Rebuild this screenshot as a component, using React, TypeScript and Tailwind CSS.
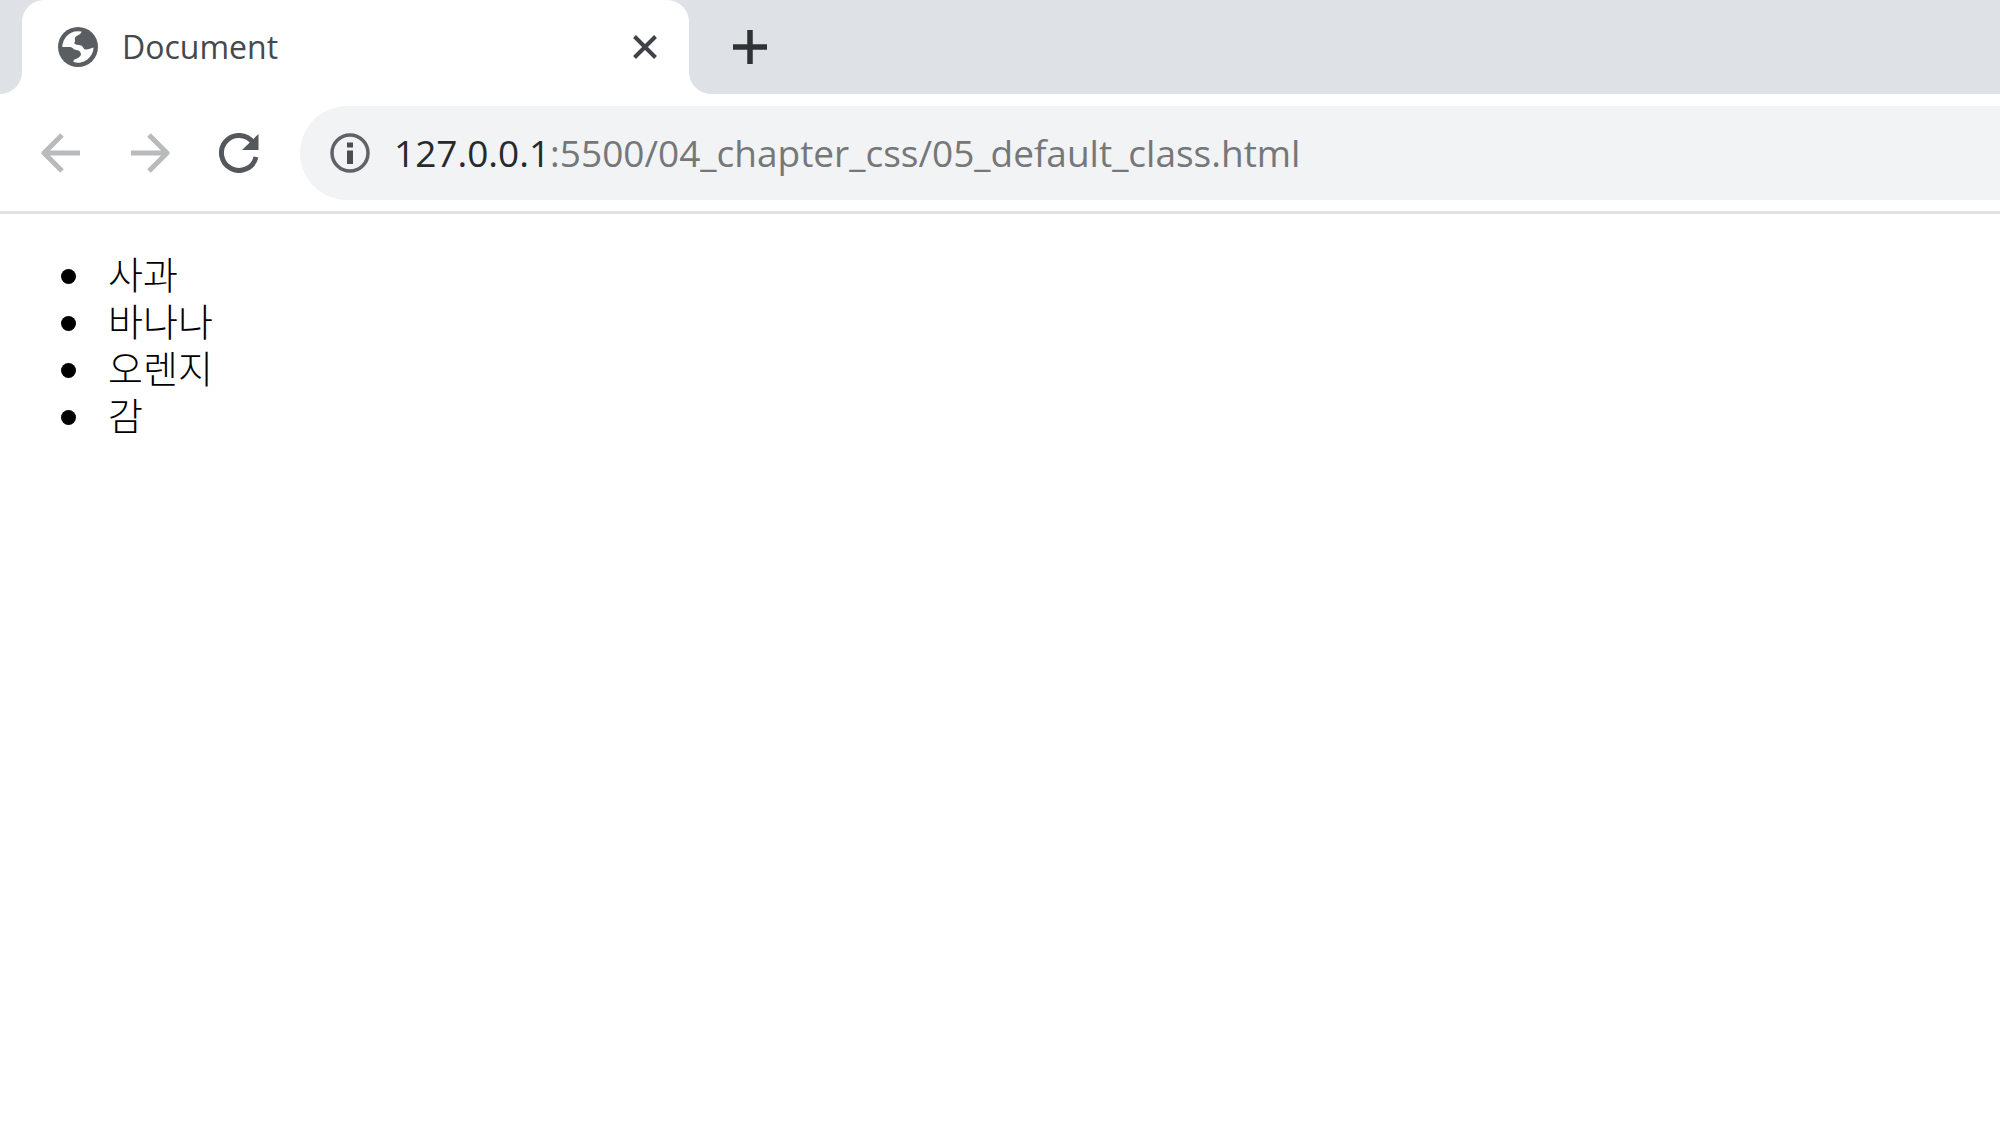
const fruits = ['사과', '바나나', '오렌지', '감'];

function GlobeIcon() {
  return (
    <svg viewBox="0 0 40 40" className="size-10 shrink-0" aria-hidden="true">
      <circle cx="20" cy="20" r="20" fill="#5a5e63" />
      <path
        d="M23.500 4.600C23.500 6.500 21.500 7.500 19.500 8.500C17 10 16.500 11 17 13C17.500 15 16 15.500 16.500 16.500C17 18 20 17.500 23 18.500C26 20 25 22 27.500 22.500C30 23 33 21 35.600 20.500A15.700 15.700 0 0 1 15.500 35C15 32.500 17 32.500 19 31.500C22 30 21.500 29.500 23 28C23 25 21.500 23.500 18.500 23C15 22.500 15 20.500 12 20H4.300A15.700 15.700 0 0 1 23.500 4.600Z"
        fill="#fff"
      />
    </svg>
  );
}

function ArrowIcon({ flip = false }: { flip?: boolean }) {
  return (
    <svg
      viewBox="0 0 40 40"
      className={flip ? 'size-10 -scale-x-100' : 'size-10'}
      fill="none"
      stroke="#b8babc"
      strokeWidth="5"
      strokeLinejoin="round"
      aria-hidden="true"
    >
      <path d="M39 20H3M21 2L3 20L21 38" />
    </svg>
  );
}

function ReloadIcon() {
  return (
    <svg viewBox="0 0 40 40" className="size-10" aria-hidden="true">
      <path d="M34 9.500A17.500 17.500 0 1 0 37 24" fill="none" stroke="#54585d" strokeWidth="5" />
      <path d="M39.500 1V17H23Z" fill="#54585d" />
    </svg>
  );
}

function InfoIcon() {
  return (
    <svg viewBox="0 0 40 40" className="size-10" aria-hidden="true">
      <circle cx="20" cy="20" r="18" fill="none" stroke="#5f6368" strokeWidth="3.500" />
      <path d="M17 9.500h6v5h-6zM17 17.500h6v13.500h-6z" fill="#4a4d51" />
    </svg>
  );
}

export default function App() {
  return (
    <div className="min-h-screen bg-white font-['Open_Sans','Noto_Sans_CJK_KR',sans-serif]">
      <header className="border-b-3 border-[#e2e2e3]">
        <div className="flex h-[94px] bg-white">
          <div className="w-[22px] shrink-0 rounded-br-[22px] bg-[#dee1e6]" />
          <div className="w-[667px] shrink-0 bg-[#dee1e6]">
            <div className="flex h-full items-center rounded-t-[22px] bg-white pr-7 pl-9">
              <GlobeIcon />
              <span className="flex-1 pl-6 text-[32px] leading-10 text-[#45494d]">Document</span>
              <button type="button" aria-label="Close tab" className="p-1">
                <svg viewBox="0 0 24 24" className="size-6" stroke="#3f4246" strokeWidth="4" aria-hidden="true">
                  <path d="M1.500 1.500L22.500 22.500M22.500 1.500L1.500 22.500" />
                </svg>
              </button>
            </div>
          </div>
          <div className="flex flex-1 items-center rounded-bl-[22px] bg-[#dee1e6] pl-11">
            <button type="button" aria-label="New tab">
              <svg viewBox="0 0 34 34" className="size-[34px]" stroke="#303336" strokeWidth="5.500" aria-hidden="true">
                <path d="M17 0V34M0 17H34" />
              </svg>
            </button>
          </div>
        </div>

        <div className="flex items-center pt-3 pb-[11px] pl-[41px]">
          <nav className="flex gap-[49px] pr-[41px]">
            <button type="button" aria-label="Back">
              <ArrowIcon />
            </button>
            <button type="button" aria-label="Forward">
              <ArrowIcon flip />
            </button>
            <button type="button" aria-label="Reload">
              <ReloadIcon />
            </button>
          </nav>
          <div className="flex h-[94px] flex-1 items-center rounded-l-full bg-[#f1f3f4] pl-[30px] text-[37px] leading-[50px]">
            <button type="button" aria-label="Site information" className="mr-6">
              <InfoIcon />
            </button>
            <label htmlFor="address" className="text-[#27292c]">
              127.0.0.1
            </label>
            <input
              id="address"
              type="text"
              defaultValue=":5500/04_chapter_css/05_default_class.html"
              className="min-w-0 flex-1 bg-transparent text-[#757779] outline-none"
            />
          </div>
        </div>
      </header>

      <main className="px-[61px] py-[39px]">
        <ul className="font-['Liberation_Sans','Noto_Sans_CJK_KR',sans-serif] text-[38px] leading-[47px] font-light text-black">
          {fruits.map((fruit) => (
            <li key={fruit} className="flex items-center gap-8 before:size-[15px] before:rounded-full before:bg-black">
              {fruit}
            </li>
          ))}
        </ul>
      </main>
    </div>
  );
}
